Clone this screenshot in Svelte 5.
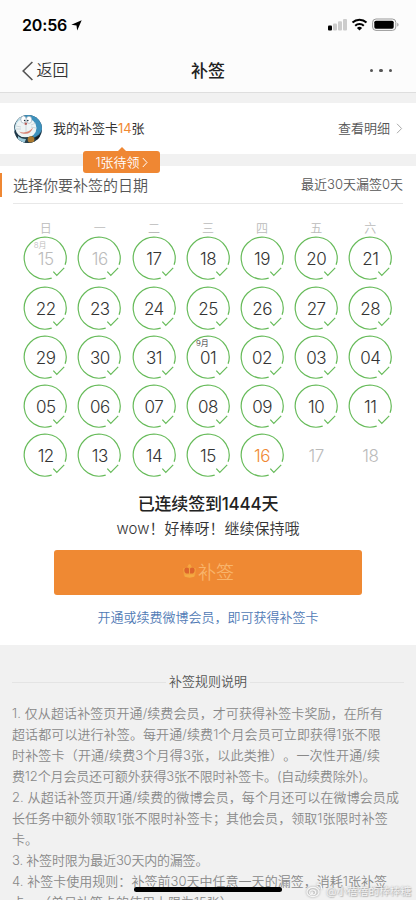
<script>
  const weekdays = ['日', '一', '二', '三', '四', '五', '六'];
  const dates = [
    15, 16, 17, 18, 19, 20, 21, 22, 23, 24, 25, 26, 27, 28, 29, 30, 31,
    1, 2, 3, 4, 5, 6, 7, 8, 9, 10, 11, 12, 13, 14, 15, 16, 17, 18
  ];
  const days = dates.map((n, i) => ({
    label: String(n).padStart(2, '0'),
    month: i === 0 ? '8月' : i === 17 ? '9月' : '',
    muted: i < 2 || i > 32,
    today: i === 32,
    signed: i < 33
  }));
  // Each rule line carries its own tracking in px.
  const rules = [
    ['1. 仅从超话补签页开通/续费会员，才可获得补签卡奖励，在所有', 0.1],
    ['超话都可以进行补签。每开通/续费1个月会员可立即获得1张不限', 0.1],
    ['时补签卡（开通/续费3个月得3张，以此类推）。一次性开通/续', 0.18],
    ['费12个月会员还可额外获得3张不限时补签卡。(自动续费除外)。', -0.14],
    ['2. 从超话补签页开通/续费的微博会员，每个月还可以在微博会员成', 0.1],
    ['长任务中额外领取1张不限时补签卡；其他会员，领取1张限时补签', 0.05],
    ['卡。', 0],
    ['3. 补签时限为最近30天内的漏签。', -0.2],
    ['4. 补签卡使用规则：补签前30天中任意一天的漏签，消耗1张补签', 0.03],
    ['卡。（单日补签卡的使用上限为15张）', 0]
  ];
</script>

<div class="screen">
  <header>
    <div class="status">
      <span class="time">20:56</span>
      <svg class="loc" width="11" height="11" viewBox="0 0 11 11"><path d="M10.7.3 6.2 10.6 5.5 5.6.3 4.8z" /></svg>
      <svg class="sys" width="72" height="14" viewBox="0 0 72 14">
        <rect x="0" y="7.5" width="4" height="5" rx="1" />
        <rect x="5" y="5.5" width="4" height="7" rx="1" fill="#ccc" />
        <rect x="10" y="3.3" width="4" height="9.2" rx="1" fill="#ccc" />
        <rect x="15" y="1" width="4" height="11.5" rx="1" fill="#ccc" />
        <g fill="none" stroke="#000" stroke-width="2">
          <path d="M24.5 4.6a10.2 10.2 0 0 1 14 0M27.2 7.7a6.2 6.2 0 0 1 8.6 0" />
        </g>
        <path d="M31.5 12.5 28.9 9.9a3.8 3.8 0 0 1 5.2 0z" />
        <rect x="44.6" y="1" width="23.2" height="11.4" rx="3.4" fill="none" stroke="#999" />
        <rect x="46.3" y="2.7" width="19.4" height="8" rx="1.6" />
        <path d="M69.3 4.8a2.1 2.1 0 0 1 0 3.8z" fill="#999" />
      </svg>
    </div>
    <nav>
      <div class="back">
        <svg width="12" height="20" viewBox="0 0 12 20"><path d="M10.4 1 1.2 10l9.2 9" /></svg>
        <span>返回</span>
      </div>
      <h1>补签</h1>
      <div class="more"><i></i><i></i><i></i></div>
    </nav>
  </header>

  <section class="cards">
    <svg class="avatar" width="30" height="30" viewBox="0 0 30 30">
      <defs><clipPath id="face"><circle cx="15" cy="15" r="14" /></clipPath></defs>
      <g clip-path="url(#face)">
        <rect width="30" height="30" fill="#1d3748" />
        <ellipse cx="17" cy="12" rx="12.5" ry="12" fill="#3d91bd" />
        <path d="M1 18Q2 5 9 2l-4 10z" fill="#b9dce9" />
        <ellipse cx="13" cy="14" rx="10.5" ry="10" fill="#eef4f5" />
        <path d="M2 21q7 4 18 1l4 8H4z" fill="#273f4b" />
        <path d="M5 22q3 3 8 3l-2 5H5z" fill="#9bc9da" />
        <circle cx="18" cy="25.5" r="3.3" fill="#ad7a2f" />
        <path d="M22 24l5-3-1 7z" fill="#172128" />
      </g>
      <g fill="#fff" stroke="#8fa5b1" stroke-width=".6">
        <ellipse cx="10.5" cy="5.5" rx="2.7" ry="3.6" /><ellipse cx="16" cy="5.8" rx="2.8" ry="3.6" />
      </g>
      <g fill="#182b37"><circle cx="11.6" cy="6.5" r=".8" /><circle cx="14.8" cy="6.6" r=".8" /></g>
      <circle cx="12.8" cy="9.8" r="1.3" fill="#b5605a" />
      <path d="M6 17.5q8 3 14-4-2 7-9 6.3-3 0-5-2.3z" fill="#d98272" />
      <path d="M13 11v7M3 12l5 1M3 15h5M18 11l5-2M18 13l5 1" fill="none" stroke="#a9bac3" stroke-width=".5" />
    </svg>
    <p class="mine">我的补签卡<b>14</b>张</p>
    <span class="detail">查看明细</span>
    <svg class="chev" width="7" height="11" viewBox="0 0 7 11"><path d="M1 .8 5.6 5.5 1 10.2" /></svg>
    <div class="bubble">
      <span>1张待领</span>
      <svg width="6" height="11" viewBox="0 0 6 11"><path d="M.8 1 5 5.5.8 10" /></svg>
    </div>
  </section>

  <main>
    <div class="head">
      <h2>选择你要补签的日期</h2>
      <span>最近30天漏签0天</span>
    </div>
    <div class="week">
      {#each weekdays as w}<span>{w}</span>{/each}
    </div>
    <div class="grid">
      {#each days as d}
        <div class="day" class:muted={d.muted} class:today={d.today}>
          {#if d.signed}
            <svg width="44" height="44" viewBox="0 0 44 44">
              <path d="M28.7 42.1A21 21 0 1 1 42.1 28.8" /><path d="m30.3 35.6 3.5 3.8 7.4-7.5" />
            </svg>
          {/if}
          {#if d.month}<small>{d.month}</small>{/if}
          <span>{d.label}</span>
        </div>
      {/each}
    </div>
    <p class="streak">已连续签到1444天</p>
    <p class="wow">wow！好棒呀！继续保持哦</p>
    <button>
      <svg width="15" height="15" viewBox="0 0 14 14">
        <path d="M1 4.2 4 3l3-2 3 2 3 1.2-.8 6.8H1.8z" fill="#f2a13d" />
        <path d="M6.5 4.2v4.7H3.8C1.5 7.3 1.7 3.2 4.2 3.2q1.6 0 2.3 1zM7.5 4.2v4.7h2.7c2.3-1.6 2.1-5.7-.4-5.7q-1.6 0-2.3 1z" fill="#dd642c" />
        <path d="M2.5 10h9v2q-4.5 1.5-9 0z" fill="#f5aa43" /><circle cx="7" cy="1.5" r="1.2" fill="#f5aa43" />
      </svg>
      <span>补签</span>
    </button>
    <p class="link">开通或续费微博会员，即可获得补签卡</p>
  </main>

  <section class="rules">
    <div class="title"><i></i><span>补签规则说明</span><i></i></div>
    {#each rules as [text, tracking]}<p style="letter-spacing: {tracking}px">{text}</p>{/each}
  </section>

  <div class="home"></div>
  <div class="mark">
    <svg width="17" height="15" viewBox="0 0 17 15">
      <ellipse cx="7" cy="9" rx="6" ry="4.6" /><ellipse cx="6.6" cy="9.4" rx="3" ry="2.5" /><circle cx="6" cy="9.8" r="1" />
      <path d="M10.8 1.2q5-.7 4.8 5M10.7 3.7q2.6-.2 2.5 2.3" />
    </svg>
    <span>@小蓓蓓的棒棒糖</span>
  </div>
</div>

<style>
  :global(body) { margin: 0; background: #f1f1f1; }
  .screen {
    position: relative; width: 416px; height: 900px; overflow: hidden; background: #f1f1f1;
    font-family: Inter, "Noto Sans CJK SC", sans-serif; font-weight: 350; color: #333;
    text-spacing-trim: space-all;
  }
  p, h1, h2 { margin: 0; font-weight: inherit; white-space: nowrap; }
  svg { display: block; flex: none; }
  header { height: 93px; background: #fcfcfc; border-bottom: 1px solid #dedede; box-sizing: border-box; }
  .status { display: flex; align-items: center; height: 50px; padding: 0 16px 0 22px; }
  .time { font-size: 16px; font-weight: 600; color: #000; letter-spacing: -.15px; }
  .loc { margin-left: 4px; }
  .sys { margin-left: auto; }
  nav { display: flex; align-items: center; justify-content: space-between; height: 41px; padding: 0 24px 0 22px; }
  .back { display: flex; align-items: center; width: 78px; gap: 2.5px; font-size: 16px; line-height: 20px; }
  .back span { padding-bottom: 1px; }
  .back path { fill: none; stroke: #555; stroke-width: 1.6; }
  h1 { font-size: 17px; font-weight: 500; color: #222; padding-bottom: 3px; }
  .more { display: flex; justify-content: flex-end; gap: 6px; width: 76px; }
  .more i { width: 3.5px; height: 3.5px; border-radius: 50%; background: #555; }

  .cards { position: relative; display: flex; align-items: center; height: 51px; margin-top: 10px; padding: 0 13px; background: #fff; font-size: 13px; }
  .mine { margin-left: 10px; padding-bottom: 2px; font-weight: 400; }
  .mine b { font-weight: 400; color: #f08832; letter-spacing: -.1px; }
  .detail { margin-left: auto; padding-bottom: 2px; color: #555; }
  .chev { margin-left: 6px; }
  .chev path { fill: none; stroke: #aaa; }
  .bubble {
    position: absolute; left: 83px; top: 48px; width: 77px; height: 22px; box-sizing: border-box;
    display: flex; align-items: center; justify-content: center; gap: 2px; border-radius: 3px; background: #ef8733; color: #fff; z-index: 2;
  }
  .bubble span { padding-bottom: 1px; }
  .bubble::before { content: ''; position: absolute; left: 35px; top: -4px; border: solid transparent; border-width: 0 4px 4px; border-bottom-color: #ef8733; }
  .bubble path { fill: none; stroke: #fff; }

  main { height: 479px; margin-top: 12px; background: #fff; display: flex; flex-direction: column; align-items: center; }
  .head { align-self: stretch; display: flex; justify-content: space-between; align-items: center; height: 37px; margin: 0 13px; border-bottom: 1px solid #e8e8e8; font-size: 13px; color: #555; position: relative; }
  .head::before { content: ''; position: absolute; left: -13px; top: 7px; width: 2px; height: 24px; background: #ef8733; }
  .head > span { padding-bottom: 2px; }
  h2 { font-size: 15px; }
  .week, .grid { display: grid; grid-template-columns: repeat(7, 54.1px); width: 378.7px; }
  .week { margin-top: 16px; height: 18px; line-height: 18px; font-size: 12px; color: #bbb; text-align: center; }
  .grid { grid-auto-rows: 49.2px; height: 246px; margin-top: -4px; }
  .day { position: relative; display: flex; align-items: center; justify-content: center; padding-top: 1.6px; font-size: 17px; letter-spacing: -.5px; }
  .day svg { position: absolute; left: 4.7px; top: 2.4px; }
  .day path { fill: none; stroke: #67bb5a; stroke-width: 1.2; }
  .day small { position: absolute; left: 15px; top: 5px; font-size: 8px; line-height: 12px; letter-spacing: 0; }
  .muted { color: #bbb; }
  .today { color: #f08832; }
  .streak { margin-top: 11px; height: 26px; line-height: 26px; font-size: 17px; font-weight: 500; color: #222; letter-spacing: -.2px; }
  .wow { height: 22px; line-height: 22px; margin-top: 1px; font-size: 15px; }
  button {
    display: flex; align-items: center; justify-content: center; gap: 1px; width: 308px; height: 45px; margin: 10px 0 0; padding: 0 0 4px;
    border: 0; border-radius: 3px; background: #ef8933; color: #f8b46b; font: inherit; font-size: 18px;
  }
  button svg { margin-top: 1px; }
  .link { margin-top: 11px; height: 22px; line-height: 22px; font-size: 13px; color: #4f7ab5; }

  .rules { padding: 25px 12px 0; font-size: 13px; color: #888; }
  .title { display: flex; align-items: center; gap: 3px; height: 20px; margin-bottom: 12.5px; color: #555; }
  .title i { flex: 1; height: 1px; margin-top: 4px; background: #e4e4e4; }
  .rules p { height: 21.1px; line-height: 21.1px; }
  .home { position: absolute; left: 134px; top: 887px; width: 148px; height: 5px; border-radius: 3px; background: #000; }
  .mark { position: absolute; left: 306px; top: 882px; display: flex; align-items: center; gap: 3px; height: 17px; font-size: 10.7px; color: #f6f6f6; text-shadow: 0 0 2px #999, 1px 1px 1px #bbb; white-space: nowrap; }
  .mark svg { filter: drop-shadow(0 0 1px #999); }
  .mark svg * { fill: none; stroke: #f6f6f6; stroke-width: 1.2; }
</style>
